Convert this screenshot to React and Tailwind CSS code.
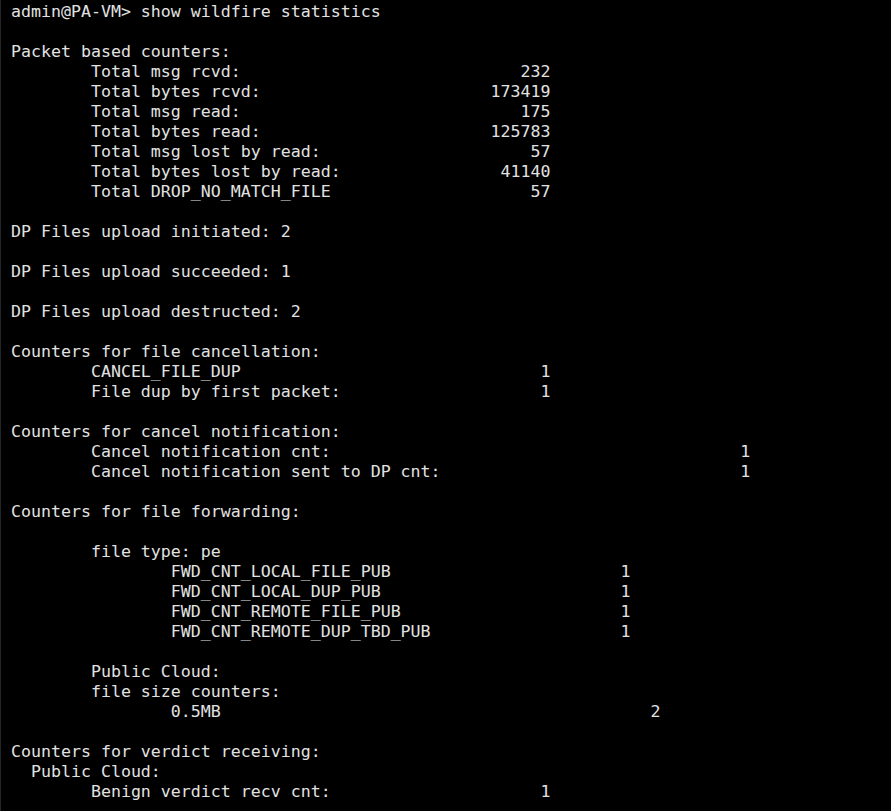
import React from 'react';

// each entry: [indent, label, value, column where value ends]
const lines = [
    ['', 'admin@PA-VM> show wildfire statistics'],
    [''],
    ['', 'Packet based counters:'],
    ['        ', 'Total msg rcvd:', '232', 54],
    ['        ', 'Total bytes rcvd:', '173419', 54],
    ['        ', 'Total msg read:', '175', 54],
    ['        ', 'Total bytes read:', '125783', 54],
    ['        ', 'Total msg lost by read:', '57', 54],
    ['        ', 'Total bytes lost by read:', '41140', 54],
    ['        ', 'Total DROP_NO_MATCH_FILE', '57', 54],
    [''],
    ['', 'DP Files upload initiated: 2'],
    [''],
    ['', 'DP Files upload succeeded: 1'],
    [''],
    ['', 'DP Files upload destructed: 2'],
    [''],
    ['', 'Counters for file cancellation:'],
    ['        ', 'CANCEL_FILE_DUP', '1', 54],
    ['        ', 'File dup by first packet:', '1', 54],
    [''],
    ['', 'Counters for cancel notification:'],
    ['        ', 'Cancel notification cnt:', '1', 74],
    ['        ', 'Cancel notification sent to DP cnt:', '1', 74],
    [''],
    ['', 'Counters for file forwarding:'],
    [''],
    ['        ', 'file type: pe'],
    ['                ', 'FWD_CNT_LOCAL_FILE_PUB', '1', 62],
    ['                ', 'FWD_CNT_LOCAL_DUP_PUB', '1', 62],
    ['                ', 'FWD_CNT_REMOTE_FILE_PUB', '1', 62],
    ['                ', 'FWD_CNT_REMOTE_DUP_TBD_PUB', '1', 62],
    [''],
    ['        ', 'Public Cloud:'],
    ['        ', 'file size counters:'],
    ['                ', '0.5MB', '2', 65],
    [''],
    ['', 'Counters for verdict receiving:'],
    ['  ', 'Public Cloud:'],
    ['        ', 'Benign verdict recv cnt:', '1', 54],
];

const render = ([indent, label = '', value, end]) => {
    let text = indent + label;
    if (value) {
        const pad = end - value.length - text.length;
        text += ' '.repeat(Math.max(1, pad)) + value;
    }
    return text || ' ';
};

const App = () => {
    return (
        <div className="w-[891px] h-[811px] overflow-hidden bg-black border-l border-[#262626]">
            <pre className="pl-[10px] pt-[2px] m-0 text-[#e2e2e2] text-[16.6px] leading-[20px] font-['DejaVu_Sans_Mono',monospace]">
                {lines.map((l, i) => (
                    <div key={i}>{render(l)}</div>
                ))}
            </pre>
        </div>
    );
};

export default App;
